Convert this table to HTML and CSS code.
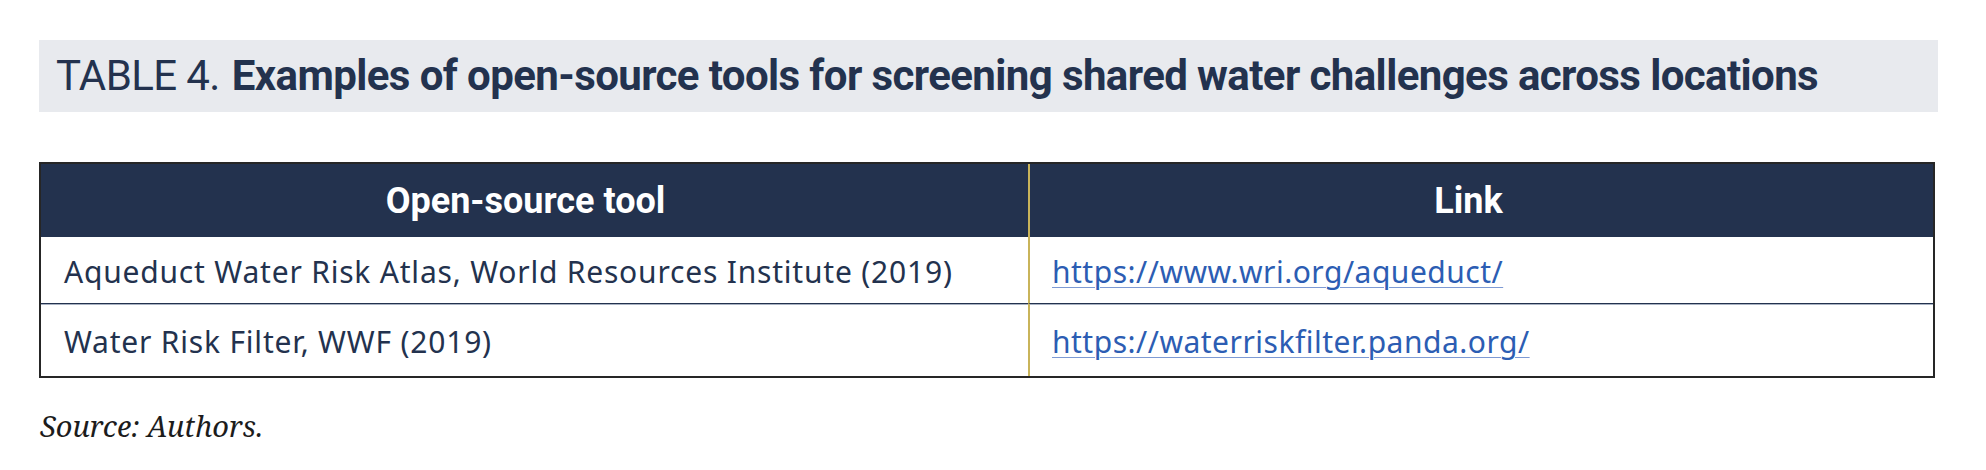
FILE: index.html
```html
<!DOCTYPE html>
<html lang="en">
<head>
<meta charset="utf-8">
<title>Table 4</title>
<link rel="stylesheet" href="styles.css">
</head>
<body>
<div class="page">
  <h2 class="caption"><span class="caption-num">TABLE 4.</span> <span class="caption-title">Examples of open-source tools for screening shared water challenges across locations</span></h2>
  <div class="tbl">
    <div class="th">Open-source tool</div>
    <div class="th th-link">Link</div>
    <div class="td row1">Aqueduct Water Risk Atlas, World Resources Institute (2019)</div>
    <div class="td td-link row1"><a href="#">https://www.wri.org/aqueduct/</a></div>
    <div class="td row2">Water Risk Filter, WWF (2019)</div>
    <div class="td td-link row2"><a href="#">https://waterriskfilter.panda.org/</a></div>
  </div>
  <p class="source">Source: Authors.</p>
</div>
</body>
</html>
```
FILE: styles.css
```css
html, body {
  margin: 0;
  padding: 0;
  background: #ffffff;
}

.page {
  padding: 40px 48px 0 39px;
  color: #23324e;
}

.caption {
  margin: 0;
  width: 1899px;
  height: 72px;
  box-sizing: border-box;
  background: #e8eaee;
  padding: 0 0 0 17px;
  display: flex;
  align-items: center;
  font-family: Roboto, "Liberation Sans", sans-serif;
  font-size: 42px;
  line-height: 1;
  letter-spacing: -0.6px;
  color: #23324e;
  white-space: nowrap;
}

.caption-num {
  font-weight: 400;
  margin-right: 12px;
}

.caption-title {
  font-weight: 700;
}

.tbl {
  margin-top: 50px;
  width: 1896px;
  box-sizing: border-box;
  border: 2px solid #262626;
  display: grid;
  grid-template-columns: 987px 1fr;
  grid-template-rows: 73px 66px 73px;
}

.th {
  background: #23324e;
  color: #ffffff;
  font-family: Roboto, "Liberation Sans", sans-serif;
  font-weight: 700;
  font-size: 36px;
  display: flex;
  align-items: center;
  justify-content: center;
  padding-right: 18px;
}

.th-link {
  border-left: 2px solid #c9b45a;
  padding-right: 26px;
}

.td {
  display: flex;
  align-items: center;
  padding-left: 23px;
  font-family: "Noto Sans", "Open Sans", sans-serif;
  font-size: 30px;
  letter-spacing: 0.8px;
  color: #23324e;
  white-space: nowrap;
}

.td-link {
  border-left: 2px solid #c9b45a;
  padding-left: 22px;
  letter-spacing: 0.5px;
}

.td a {
  color: #2c5db3;
  text-decoration: underline;
  text-decoration-color: #7d9ad4;
  text-decoration-thickness: 1px;
  text-underline-offset: 4px;
}

.row1 {
  padding-top: 2px;
}

.row2 {
  border-top: 1px solid #23324e;
  box-shadow: inset 0 1px 0 #a9b2c2;
  padding-top: 2px;
}

.source {
  margin: 33px 0 0 1px;
  font-family: "Noto Serif", "Liberation Serif", serif;
  font-style: italic;
  font-size: 29px;
  line-height: 1;
  color: #1c1c1c;
}
```
